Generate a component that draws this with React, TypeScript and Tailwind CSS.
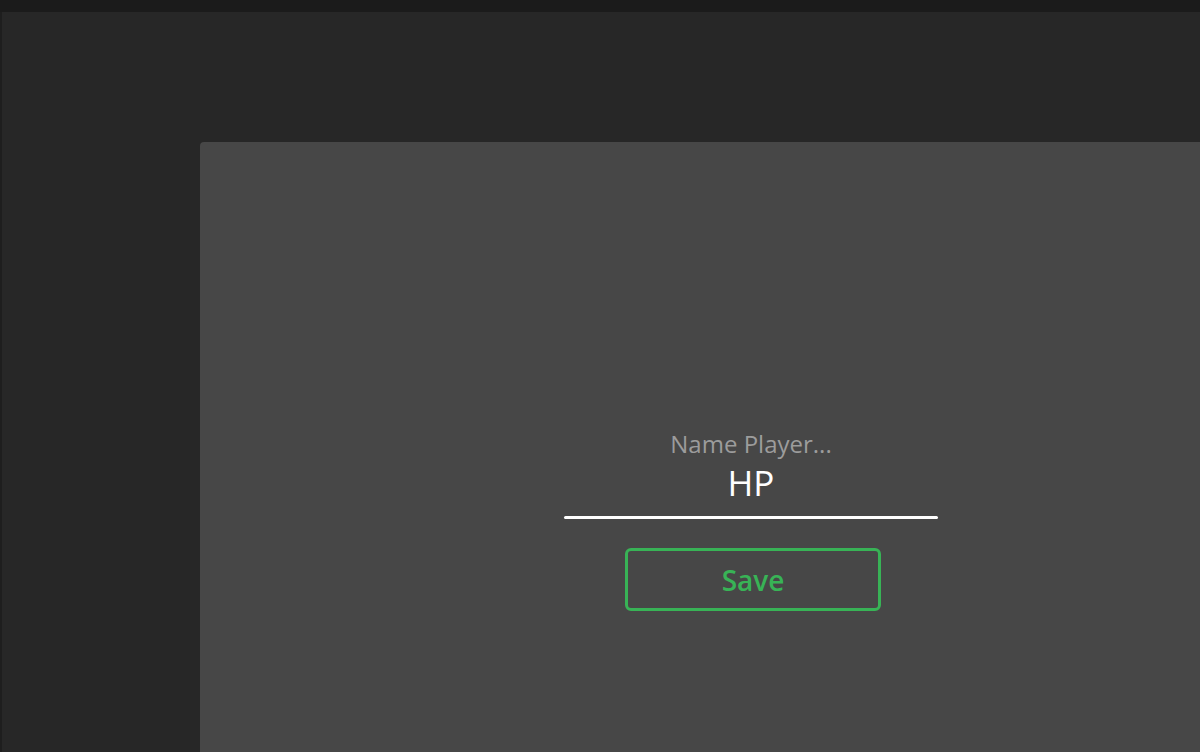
export default function App() {
  return (
    <div
      className="flex h-[752px] w-[1200px] flex-col overflow-hidden bg-[#1b1b1b]"
      style={{ fontFamily: '"Open Sans", "Noto Sans", sans-serif' }}
    >
      <div className="h-[12px] shrink-0 bg-[#1b1b1b]" />
      <div className="flex flex-1 border-l-2 border-[#1e1e1e] bg-[#272727] pl-[198px] pt-[130px]">
        <div className="flex w-[1102px] shrink-0 flex-col items-center rounded-tl-[4px] bg-[#474747] pt-[287px]">
          <div className="text-[24px] leading-[30px] text-[#9c9c9c]">Name Player...</div>
          <div className="mt-[4px] text-[35px] leading-[40px] text-white">HP</div>
          <div className="mt-[13px] h-[3px] w-[374px] rounded-full bg-white" />
          <button className="ml-[4px] mt-[29px] flex h-[63px] w-[256px] items-center justify-center rounded-[6px] border-[3px] border-[#38b356] text-[28px] font-semibold text-[#38b356]">
            Save
          </button>
        </div>
      </div>
    </div>
  );
}
